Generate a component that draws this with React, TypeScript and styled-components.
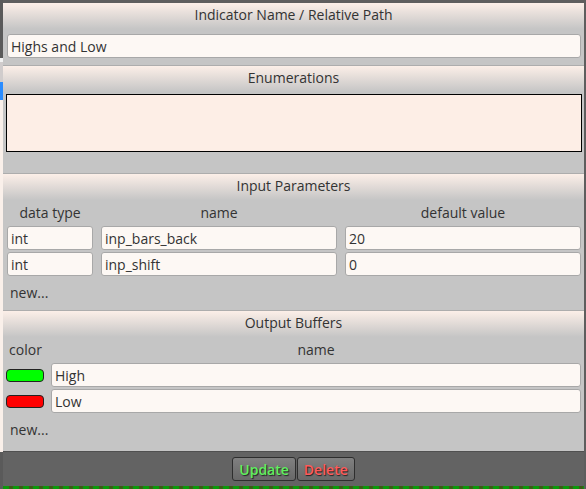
import styled, { createGlobalStyle } from "styled-components";

const GlobalStyle = createGlobalStyle`
  body {
    margin: 0;
    background: #5e5e5e;
    font-family: "Open Sans", "Noto Sans", sans-serif;
  }
`;

const Frame = styled.div`
  display: flex;
  width: 586px;
  height: 489px;
  overflow: hidden;
`;

const LeftStrip = styled.div`
  width: 3px;
  display: flex;
  flex-direction: column;
`;

const StripPiece = styled.div<{ $h: number; $c: string }>`
  height: ${(p) => p.$h}px;
  background: ${(p) => p.$c};
  flex-shrink: 0;
`;

const Window = styled.div`
  flex: 1;
  margin: 3px 2px 0 0;
  display: flex;
  flex-direction: column;
  background: #c5c5c5;
  color: #333;
`;

const Section = styled.div<{ $first?: boolean }>`
  border-top: ${(p) => (p.$first ? "none" : "1px solid #adadad")};
`;

const SectionHead = styled.div`
  height: 26px;
  line-height: 24px;
  text-align: center;
  font-size: 14px;
  background: linear-gradient(#fcefe8, #c5c5c5);
`;

const SectionBody = styled.div<{ $pad: string }>`
  padding: ${(p) => p.$pad};
`;

const TextBox = styled.input`
  box-sizing: border-box;
  width: 100%;
  height: 24px;
  margin: 0;
  padding: 0 3px;
  border: 1px solid #a8a8a8;
  border-radius: 3px;
  background: #fdf8f4;
  color: #333;
  font-family: "Open Sans", "Noto Sans", sans-serif;
  font-size: 14px;
  outline: none;
`;

const EnumArea = styled.textarea`
  display: block;
  box-sizing: border-box;
  width: 100%;
  height: 58px;
  margin: 0;
  border: 1px solid #000;
  background: #fdeee6;
  resize: none;
  outline: none;
`;

const ParamGrid = styled.div`
  display: grid;
  grid-template-columns: 86px 1fr 1fr;
  column-gap: 8px;
  row-gap: 2px;
`;

const BufferGrid = styled.div`
  display: grid;
  grid-template-columns: 37px 1fr;
  column-gap: 7px;
  row-gap: 2px;
  align-items: center;
`;

const ColLabel = styled.div`
  text-align: center;
  font-size: 14px;
  line-height: 19px;
  height: 21px;
  white-space: nowrap;
`;

const Swatch = styled.div<{ $color: string }>`
  box-sizing: border-box;
  height: 13px;
  border: 1px solid #222;
  border-radius: 4px;
  background: ${(p) => p.$color};
  margin-left: -1px;
`;

const NewLink = styled.div`
  font-size: 14px;
  padding: 7px 0 0 3px;
  height: 27px;
`;

const Footer = styled.div`
  height: 34px;
  margin-top: auto;
  border-top: 1px solid #505050;
  background: #636363;
  display: flex;
  justify-content: center;
  align-items: center;
  gap: 1px;
`;

const FootButton = styled.button<{ $tone: string }>`
  height: 24px;
  padding: 0 6px;
  border: 1px solid #2e2e2e;
  border-radius: 3px;
  background: linear-gradient(#808080, #686868);
  color: ${(p) => p.$tone};
  font-family: "Open Sans", "Noto Sans", sans-serif;
  font-size: 14px;
  font-weight: 600;
  text-shadow: 1px 1px 1px #222;
  cursor: pointer;
`;

const Dashes = styled.div`
  height: 3px;
  background: repeating-linear-gradient(
    90deg,
    #0a9a0a 0 6px,
    #3d5a18 6px 10px
  );
`;

const params = [
  { type: "int", name: "inp_bars_back", value: "20" },
  { type: "int", name: "inp_shift", value: "0" },
];

const buffers = [
  { color: "#00ff00", name: "High" },
  { color: "#ff0000", name: "Low" },
];

const App = () => {
  return (
    <>
      <GlobalStyle />
      <Frame>
        <LeftStrip>
          <StripPiece $h={58} $c="#5a5a5a" />
          <StripPiece $h={4} $c="#f2f2f2" />
          <StripPiece $h={20} $c="#d0cccc" />
          <StripPiece $h={18} $c="#2a8cff" />
          <StripPiece $h={352} $c="#faf0ea" />
          <StripPiece $h={37} $c="#5a5a5a" />
        </LeftStrip>
        <Window>
          <Section $first>
            <SectionHead>Indicator Name / Relative Path</SectionHead>
            <SectionBody $pad="5px 3px 7px 4px">
              <TextBox defaultValue="Highs and Low" />
            </SectionBody>
          </Section>
          <Section>
            <SectionHead>Enumerations</SectionHead>
            <SectionBody $pad="2px 2px 21px 3px">
              <EnumArea />
            </SectionBody>
          </Section>
          <Section>
            <SectionHead>Input Parameters</SectionHead>
            <SectionBody $pad="3px 3px 0 4px">
              <ParamGrid>
                <ColLabel>data type</ColLabel>
                <ColLabel>name</ColLabel>
                <ColLabel>default value</ColLabel>
                {params.map((p) => (
                  <>
                    <TextBox key={p.name + "t"} defaultValue={p.type} />
                    <TextBox key={p.name + "n"} defaultValue={p.name} />
                    <TextBox key={p.name + "v"} defaultValue={p.value} />
                  </>
                ))}
              </ParamGrid>
              <NewLink>new...</NewLink>
            </SectionBody>
          </Section>
          <Section>
            <SectionHead>Output Buffers</SectionHead>
            <SectionBody $pad="3px 3px 0 4px">
              <BufferGrid>
                <ColLabel>color</ColLabel>
                <ColLabel>name</ColLabel>
                {buffers.map((b) => (
                  <>
                    <Swatch key={b.name + "c"} $color={b.color} />
                    <TextBox key={b.name} defaultValue={b.name} />
                  </>
                ))}
              </BufferGrid>
              <NewLink>new...</NewLink>
            </SectionBody>
          </Section>
          <Footer>
            <FootButton $tone="#5fef5f">Update</FootButton>
            <FootButton $tone="#ff5a5a">Delete</FootButton>
          </Footer>
          <Dashes />
        </Window>
      </Frame>
    </>
  );
};

export default App;
